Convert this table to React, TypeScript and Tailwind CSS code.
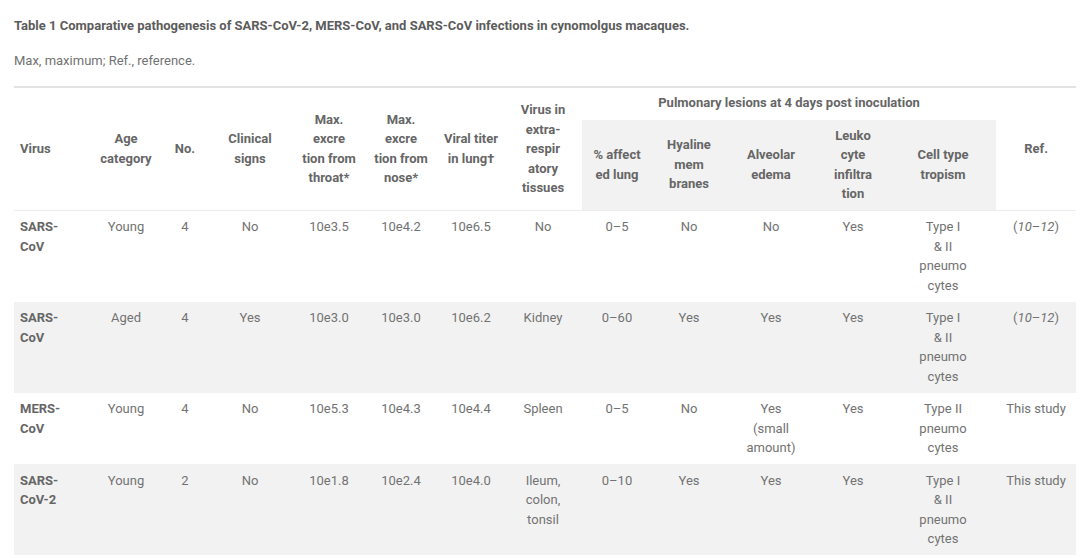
import React from "react";

type Row = {
  virus: string[];
  age: string;
  no: string;
  clinical: string;
  throat: string;
  nose: string;
  titer: string;
  extra: string[];
  affected: string;
  hyaline: string;
  edema: string[];
  leuko: string;
  tropism: string[];
  ref: "cite" | "study";
};

const rows: Row[] = [
  {
    virus: ["SARS-", "CoV"],
    age: "Young",
    no: "4",
    clinical: "No",
    throat: "10e3.5",
    nose: "10e4.2",
    titer: "10e6.5",
    extra: ["No"],
    affected: "0–5",
    hyaline: "No",
    edema: ["No"],
    leuko: "Yes",
    tropism: ["Type I", "& II", "pneumo", "cytes"],
    ref: "cite",
  },
  {
    virus: ["SARS-", "CoV"],
    age: "Aged",
    no: "4",
    clinical: "Yes",
    throat: "10e3.0",
    nose: "10e3.0",
    titer: "10e6.2",
    extra: ["Kidney"],
    affected: "0–60",
    hyaline: "Yes",
    edema: ["Yes"],
    leuko: "Yes",
    tropism: ["Type I", "& II", "pneumo", "cytes"],
    ref: "cite",
  },
  {
    virus: ["MERS-", "CoV"],
    age: "Young",
    no: "4",
    clinical: "No",
    throat: "10e5.3",
    nose: "10e4.3",
    titer: "10e4.4",
    extra: ["Spleen"],
    affected: "0–5",
    hyaline: "No",
    edema: ["Yes", "(small", "amount)"],
    leuko: "Yes",
    tropism: ["Type II", "pneumo", "cytes"],
    ref: "study",
  },
  {
    virus: ["SARS-", "CoV-2"],
    age: "Young",
    no: "2",
    clinical: "No",
    throat: "10e1.8",
    nose: "10e2.4",
    titer: "10e4.0",
    extra: ["Ileum,", "colon,", "tonsil"],
    affected: "0–10",
    hyaline: "Yes",
    edema: ["Yes"],
    leuko: "Yes",
    tropism: ["Type I", "& II", "pneumo", "cytes"],
    ref: "study",
  },
];

const widths = [74, 76, 42, 88, 70, 74, 66, 78, 70, 74, 90, 74, 106, 80];

const Lines = ({ lines }: { lines: string[] }) => (
  <>
    {lines.map((l, i) => (
      <span key={i} className="block">
        {l}
      </span>
    ))}
  </>
);

const th = "px-1 py-[6px] font-bold text-center align-middle";
const sub = "px-1 py-[6px] font-bold text-center align-middle bg-[#f2f2f2]";
const td = "px-1 py-[6.5px] text-center align-top";

export default function App() {
  return (
    <div className="w-[1080px] h-[558px] overflow-hidden bg-white px-[14px] pt-[16px] font-['Roboto',sans-serif] text-[13px] leading-[19.5px] text-[#727272]">
      <p className="font-bold text-[#5c5c5c]">
        Table 1 Comparative pathogenesis of SARS-CoV-2, MERS-CoV, and SARS-CoV infections in cynomolgus macaques.
      </p>
      <p className="mt-[15px] text-[#727272]">Max, maximum; Ref., reference.</p>

      <table className="mt-[16px] w-[1062px] table-fixed border-collapse">
        <colgroup>
          {widths.map((w, i) => (
            <col key={i} style={{ width: w }} />
          ))}
        </colgroup>
        <thead className="text-[#666]">
          <tr className="border-t-2 border-[#e3e3e3]">
            <th rowSpan={2} className={`${th} !text-left pl-[6px]`}>
              Virus
            </th>
            <th rowSpan={2} className={th}>
              <Lines lines={["Age", "category"]} />
            </th>
            <th rowSpan={2} className={th}>
              No.
            </th>
            <th rowSpan={2} className={th}>
              <Lines lines={["Clinical", "signs"]} />
            </th>
            <th rowSpan={2} className={th}>
              <Lines lines={["Max.", "excre", "tion from", "throat*"]} />
            </th>
            <th rowSpan={2} className={th}>
              <Lines lines={["Max.", "excre", "tion from", "nose*"]} />
            </th>
            <th rowSpan={2} className={th}>
              <Lines lines={["Viral titer", "in lung†"]} />
            </th>
            <th rowSpan={2} className={th}>
              <Lines lines={["Virus in", "extra-", "respir", "atory", "tissues"]} />
            </th>
            <th colSpan={5} className="px-1 pt-[5px] pb-[7px] font-bold text-center">
              Pulmonary lesions at 4 days post inoculation
            </th>
            <th rowSpan={2} className={th}>
              Ref.
            </th>
          </tr>
          <tr>
            <th className={sub}>
              <Lines lines={["% affect", "ed lung"]} />
            </th>
            <th className={sub}>
              <Lines lines={["Hyaline", "mem", "branes"]} />
            </th>
            <th className={sub}>
              <Lines lines={["Alveolar", "edema"]} />
            </th>
            <th className={sub}>
              <Lines lines={["Leuko", "cyte", "infiltra", "tion"]} />
            </th>
            <th className={sub}>
              <Lines lines={["Cell type", "tropism"]} />
            </th>
          </tr>
        </thead>
        <tbody className="border-t border-[#ececec]">
          {rows.map((r, i) => (
            <tr key={i} className={i % 2 === 1 ? "bg-[#f2f2f2]" : "bg-white"}>
              <td className="pl-[6px] pr-1 py-[6.5px] align-top text-left font-bold text-[#666]">
                <Lines lines={r.virus} />
              </td>
              <td className={td}>{r.age}</td>
              <td className={td}>{r.no}</td>
              <td className={td}>{r.clinical}</td>
              <td className={td}>{r.throat}</td>
              <td className={td}>{r.nose}</td>
              <td className={td}>{r.titer}</td>
              <td className={td}>
                <Lines lines={r.extra} />
              </td>
              <td className={td}>{r.affected}</td>
              <td className={td}>{r.hyaline}</td>
              <td className={td}>
                <Lines lines={r.edema} />
              </td>
              <td className={td}>{r.leuko}</td>
              <td className={td}>
                <Lines lines={r.tropism} />
              </td>
              <td className={td}>
                {r.ref === "cite" ? (
                  <span>
                    (<i>10</i>–<i>12</i>)
                  </span>
                ) : (
                  "This study"
                )}
              </td>
            </tr>
          ))}
        </tbody>
      </table>
    </div>
  );
}
